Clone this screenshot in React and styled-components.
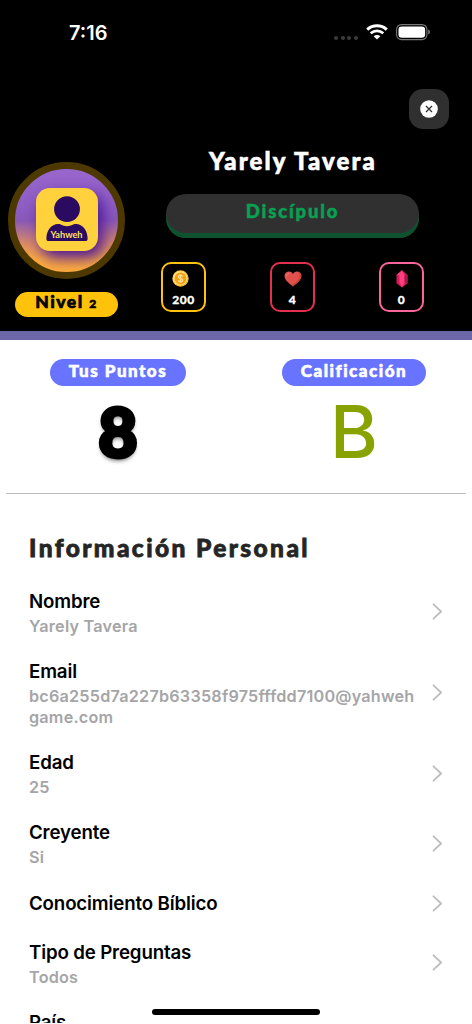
import styled, { createGlobalStyle } from 'styled-components';

const details = [
  { label: 'Nombre', value: 'Yarely Tavera' },
  { label: 'Email', value: 'bc6a255d7a227b63358f975fffdd7100@yahwehgame.com' },
  { label: 'Edad', value: '25' },
  { label: 'Creyente', value: 'Si' },
  { label: 'Conocimiento Bíblico' },
  { label: 'Tipo de Preguntas', value: 'Todos' },
  { label: 'País', value: '\u00a0' },
];

function WifiIcon() {
  return (
    <svg width="22" height="16" viewBox="0 0 22 16" fill="none">
      <path d="M1.2 5.6C6.8.5 15.2.5 20.8 5.6" stroke="#fff" strokeWidth="3" />
      <path d="M4.7 9.3C8.4 6 13.6 6 17.3 9.3" stroke="#fff" strokeWidth="2.8" />
      <path d="M11 15.6 7.6 12.2C9.5 10.5 12.5 10.5 14.4 12.2Z" fill="#fff" />
    </svg>
  );
}

function BatteryIcon() {
  return (
    <svg width="35" height="17" viewBox="0 0 35 17">
      <rect x=".6" y=".6" width="30.3" height="15" rx="4.8" fill="none" stroke="#77777a" strokeWidth="1.1" />
      <rect x="2.5" y="2.4" width="26.6" height="11.4" rx="3.3" fill="#fff" />
      <path d="M32.2 5.6c2.4.8 2.4 4.2 0 5Z" fill="#77777a" />
    </svg>
  );
}

function CloseIcon() {
  return (
    <svg width="18" height="18" viewBox="0 0 18 18">
      <circle cx="9" cy="9" r="8.8" fill="#fff" />
      <path d="m6 6 6 6m0-6-6 6" stroke="#303030" strokeWidth="1.3" />
    </svg>
  );
}

function PersonIcon() {
  return (
    <svg width="42" height="46" viewBox="0 0 42 46" fill="#2b0a62">
      <circle cx="21" cy="13.2" r="12.9" />
      <path d="M.4 42.8C.2 34.5 5.5 28.2 12 28c3.4 0 4.4 2.2 9 2.2S26.6 28 30 28c6.5.2 11.8 6.5 11.6 14.8 0 1.7-.7 2.3-2.2 2.3H2.6c-1.5 0-2.2-.6-2.2-2.3Z" />
    </svg>
  );
}

function CoinIcon() {
  return (
    <svg width="17" height="17" viewBox="0 0 17 17">
      <circle cx="8.5" cy="8.5" r="8.2" fill="#f8b62c" />
      <circle cx="8.2" cy="8.2" r="7.2" fill="#ffe27a" />
      <circle cx="8.5" cy="8.5" r="5.9" fill="#f7a11b" />
      <path d="M10.7 6.5C10.3 5.5 9.4 5.2 8.5 5.2 7.2 5.2 6.3 5.9 6.3 6.9 6.3 9 10.7 7.9 10.7 10.1 10.7 11.2 9.7 11.8 8.5 11.8 7.3 11.8 6.4 11.3 6.2 10.3M8.5 4.2V12.8" fill="none" stroke="#ffe58e" strokeWidth="1.2" />
    </svg>
  );
}

function HeartIcon() {
  return (
    <svg width="18" height="16" viewBox="0 0 18 16">
      <path d="M9 15.4C5.5 12.4.5 9.4.5 4.9.5.4 6.5-1.3 9 3c2.5-4.3 8.5-2.6 8.5 1.9 0 4.5-5 7.5-8.5 10.5Z" fill="#e2504b" />
      <path d="M14.5 1c5.3 2.5 2 8.5-5.5 14.4l-1.7-1.5C13 11.5 17 7 14.5 1Z" fill="#c84340" />
      <path d="M2.5 5.5C2.3 3.5 3.5 2.5 5 2.4" stroke="#f1827c" fill="none" />
    </svg>
  );
}

function GemIcon() {
  return (
    <svg width="12" height="18" viewBox="0 0 12 18">
      <path d="M6 .3 11.5 5v8.2L6 17.5.5 13.2V5Z" fill="#d91b5c" />
      <path d="M6 .3 8.5 5.2v7.6L6 17.5l-2.5-4.7V5.2Z" fill="#ff3f7e" />
      <path d="M6 .3 3.5 5.2.5 5Z" fill="#f3447c" />
      <path d="M8.5 5.2 11.5 5v8.2l-3-.4Z" fill="#a81850" />
    </svg>
  );
}

function ChevronIcon() {
  return (
    <svg width="11" height="17" viewBox="0 0 11 17" fill="none">
      <path d="m1.5 1.3 7.6 7.2-7.6 7.2" stroke="#bdbdbf" strokeWidth="1.8" strokeLinecap="round" strokeLinejoin="round" />
    </svg>
  );
}

const stats = [
  { value: '200', color: '#ffc20e', icon: <CoinIcon />, shift: 7 },
  { value: '4', color: '#e4304c', icon: <HeartIcon />, shift: 0 },
  { value: '0', color: '#f9649a', icon: <GemIcon />, shift: 0 },
];

export default function App() {
  return (
    <Screen>
      <GlobalStyle />
      <Header>
        <StatusBar>
          <Clock>7:16</Clock>
          <Signal>
            <i />
            <i />
            <i />
            <i />
          </Signal>
          <WifiIcon />
          <BatteryIcon />
        </StatusBar>
        <CloseButton type="button" aria-label="Cerrar">
          <CloseIcon />
        </CloseButton>
        <Profile>
          <AvatarColumn>
            <Avatar>
              <AvatarCard>
                <PersonIcon />
                <AvatarName>Yahweh</AvatarName>
              </AvatarCard>
            </Avatar>
            <Level>
              Nivel <small>2</small>
            </Level>
          </AvatarColumn>
          <ProfileInfo>
            <UserName>Yarely Tavera</UserName>
            <Rank>Discípulo</Rank>
            <Stats>
              {stats.map((stat) => (
                <Stat key={stat.color} $color={stat.color} $shift={stat.shift}>
                  <span>{stat.icon}</span>
                  <b>{stat.value}</b>
                </Stat>
              ))}
            </Stats>
          </ProfileInfo>
        </Profile>
      </Header>
      <Scores>
        <Score>
          <Pill $width="136px" $spacing="1.5px">
            Tus Puntos
          </Pill>
          <Points>8</Points>
        </Score>
        <Score>
          <Pill $width="144px" $spacing="1.5px">
            Calificación
          </Pill>
          <Grade>B</Grade>
        </Score>
      </Scores>
      <Personal>
        <h2>Información Personal</h2>
        {details.map(({ label, value }) => (
          <Row key={label}>
            <div>
              <Label>{label}</Label>
              {value && <Value>{value}</Value>}
            </div>
            <ChevronIcon />
          </Row>
        ))}
      </Personal>
      <HomeIndicator />
    </Screen>
  );
}

const GlobalStyle = createGlobalStyle`
  * {
    box-sizing: border-box;
  }

  body {
    margin: 0;
    background: #fff;
    font-family: Inter, sans-serif;
  }

  svg {
    display: block;
    flex-shrink: 0;
  }
`;

const Screen = styled.main`
  position: relative;
  width: 472px;
  height: 1023px;
  overflow: hidden;
  background: #fff;
`;

const Header = styled.header`
  height: 340px;
  background: #000;
  border-bottom: 9px solid #6c67a8;
  display: flex;
  flex-direction: column;
`;

const StatusBar = styled.div`
  height: 64px;
  padding: 0 41px 0 69px;
  display: flex;
  align-items: center;
`;

const Clock = styled.span`
  color: #fff;
  font-size: 20px;
  font-weight: 600;
  margin: 1px auto 0 0;
`;

const Signal = styled.div`
  display: flex;
  gap: 2.6px;
  margin: 11px 8px 0 0;

  i {
    width: 4px;
    height: 4px;
    border-radius: 50%;
    background: #3b3b3d;
  }

  & + svg {
    margin-right: 8px;
  }
`;

const CloseButton = styled.button`
  align-self: flex-end;
  width: 40px;
  height: 40px;
  margin: 25px 23px 0 0;
  padding: 0 1px 0 0;
  border: 0;
  border-radius: 14px;
  background: #303030;
  display: flex;
  align-items: center;
  justify-content: center;
`;

const Profile = styled.section`
  display: flex;
`;

const AvatarColumn = styled.div`
  width: 117px;
  margin: 33px 0 0 8px;
  display: flex;
  flex-direction: column;
  align-items: center;
`;

const Avatar = styled.div`
  width: 117px;
  height: 117px;
  border: 7.5px solid #4d3900;
  border-radius: 50%;
  background: linear-gradient(180deg, #9966cc 0%, #8e5ec4 35%, #8a58b8 50%, #d78a67 72%, #ffad3d 88%);
  overflow: hidden;
  display: flex;
  align-items: center;
  justify-content: center;
`;

const AvatarCard = styled.div`
  position: relative;
  width: 62px;
  height: 63px;
  margin-bottom: 2px;
  border-radius: 14px;
  background: #ffd13c;
  box-shadow: 5px 7px 15px #4b1599;
  display: flex;
  justify-content: center;
  padding-top: 8px;
`;

const AvatarName = styled.span`
  position: absolute;
  top: 40px;
  color: #ffe066;
  font: 700 9.2px/14px Lato, sans-serif;
`;

const Level = styled.div`
  width: 103px;
  height: 25px;
  margin-top: 12.5px;
  border-radius: 12.5px;
  background: #ffc20a;
  color: #050505;
  font: 900 17.5px/20px Lato, sans-serif;
  letter-spacing: 1.5px;
  -webkit-text-stroke: 0.7px;
  text-align: center;

  small {
    font-size: 12px;
  }
`;

const ProfileInfo = styled.div`
  margin: 17px 0 0 36px;
  width: 264px;
`;

const UserName = styled.h1`
  margin: 0;
  color: #fff;
  font: 900 24px/30px Lato, sans-serif;
  letter-spacing: 2.1px;
  -webkit-text-stroke: 0.6px;
  text-align: center;
`;

const Rank = styled.div`
  width: 253px;
  height: 44px;
  margin: 18px 0 0 5px;
  border-radius: 20px;
  background: #303030;
  box-shadow: inset 0 -5px #0e5230;
  color: #08a052;
  font: 900 18.5px/34px Lato, sans-serif;
  letter-spacing: 1.8px;
  -webkit-text-stroke: 0.5px;
  text-align: center;
`;

const Stats = styled.div`
  margin: 24px 1px 0 0;
  display: flex;
  justify-content: space-between;
`;

const Stat = styled.div`
  width: 45px;
  height: 50px;
  border: 2px solid ${(props) => props.$color};
  border-radius: 10px;
  display: flex;
  flex-direction: column;
  align-items: center;

  span {
    height: 17px;
    margin: 6px ${(props) => props.$shift}px 0 0;
    display: flex;
    align-items: center;
  }

  b {
    margin-top: 6px;
    color: #fff;
    font: 900 12px/14px Lato, sans-serif;
    letter-spacing: 0.6px;
    -webkit-text-stroke: 0.3px;
  }
`;

const Scores = styled.section`
  height: 153.5px;
  margin: 0 6px;
  border-bottom: 1px solid #bdbdbd;
  display: flex;
  justify-content: space-between;
  padding: 19px 40px 0 44px;
`;

const Score = styled.div`
  display: flex;
  flex-direction: column;
  align-items: center;
`;

const Pill = styled.div`
  width: ${(props) => props.$width};
  height: 27px;
  border-radius: 13.5px;
  background: #6874ff;
  color: #fff;
  font: 900 17px/23px Lato, sans-serif;
  letter-spacing: ${(props) => props.$spacing};
  -webkit-text-stroke: 0.6px;
  text-align: center;
`;

const Points = styled.div`
  color: #000;
  font: 900 67px/90px Lato, sans-serif;
  -webkit-text-stroke: 4px #000;
  text-shadow: 0 3px 4px rgba(0, 0, 0, 0.6);
`;

const Grade = styled.div`
  color: #88a200;
  font: 500 73px/92px Inter, sans-serif;
`;

const Personal = styled.section`
  padding: 0 29px;

  h2 {
    margin: 38px 0 12px;
    color: #252525;
    font: 900 24.5px/32px Lato, sans-serif;
    letter-spacing: 2.4px;
    -webkit-text-stroke: 0.8px;
  }
`;

const Row = styled.div`
  padding: 12px 0 10.3px;
  display: flex;
  align-items: center;
  justify-content: space-between;

  > div {
    width: 392px;
  }
`;

const Label = styled.div`
  color: #000;
  font-size: 18.7px;
  font-weight: 600;
  line-height: 27px;
  letter-spacing: -0.15px;
`;

const Value = styled.div`
  color: #a5a5a7;
  font-size: 16.2px;
  font-weight: 600;
  line-height: 21px;
  letter-spacing: 0.22px;
  overflow-wrap: anywhere;
  padding-top: 1px;
  margin-bottom: -1px;
`;

const HomeIndicator = styled.div`
  position: absolute;
  left: 152px;
  bottom: 8px;
  width: 168px;
  height: 6px;
  border-radius: 3px;
  background: #000;
`;
